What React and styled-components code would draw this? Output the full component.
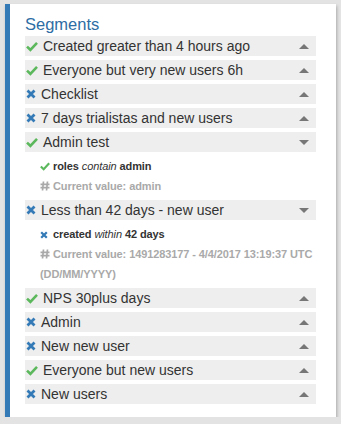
import React from "react";
import styled, { createGlobalStyle } from "styled-components";

const Global = createGlobalStyle`
  html, body { margin: 0; padding: 0; background: #e3e3e3; }
  body { font-family: "Liberation Sans", Arial, sans-serif; }
`;

const Card = styled.div`
  margin: 4px 5px 0 5px;
  width: 331px;
  box-sizing: border-box;
  background: #fff;
  border-left: 5px solid #337ab7;
  box-shadow: 1px 2px 3px rgba(0,0,0,0.25);
  padding: 9px 20px 13px 15px;
`;

const Title = styled.h3`
  margin: 0;
  font-size: 16.5px;
  font-weight: normal;
  line-height: 23px;
  color: #2e6da4;
`;

const Row = styled.div`
  display: flex;
  align-items: center;
  height: 20px;
  margin-bottom: 4px;
  background: #eeeeee;
  &:last-child { margin-bottom: 0; }
`;

const IconBox = styled.span`
  display: inline-flex;
  align-items: center;
  justify-content: center;
  width: ${p => p.$w}px;
  margin-left: 1px;
  margin-right: ${p => p.$gap}px;
`;

const Name = styled.span`
  flex: 1;
  font-size: 14px;
  color: #333;
  white-space: nowrap;
  line-height: 20px;
`;

const Caret = styled.span`
  width: 0;
  height: 0;
  margin-right: 7px;
  border-left: 5px solid transparent;
  border-right: 5px solid transparent;
  ${p => p.$down
    ? "border-top: 5px solid #777;"
    : "border-bottom: 5px solid #777;"}
`;

const Details = styled.div`
  padding: 0 0 4px 15px;
  font-size: 11px;
  letter-spacing: -0.1px;
  font-weight: bold;
  line-height: 20px;
  color: #333;
`;

const Line = styled.div`
  color: ${p => (p.$muted ? "#a9a9a9" : "#333")};
`;

const SubIcon = styled.span`
  display: inline-block;
  width: 13px;
  vertical-align: -1px;
  svg { display: block; }
`;

const Op = styled.em`
  font-weight: normal;
`;

const Check = ({ size = 12 }) => (
  <svg width={size} height={size} viewBox="0 0 12 12">
    <path d="M1 6.6 L4.4 9.8 L11 2.8" fill="none" stroke="#5cb85c" strokeWidth="2.6" strokeLinejoin="miter" />
  </svg>
);

const Cross = ({ size = 10 }) => (
  <svg width={size} height={size} viewBox="0 0 10 10">
    <path d="M1.5 1.5 L8.5 8.5 M8.5 1.5 L1.5 8.5" stroke="#337ab7" strokeWidth="2.8" strokeLinecap="butt" />
  </svg>
);

const Hash = () => (
  <svg width="10" height="10" viewBox="0 0 10 10">
    <path d="M3.5 0.5 L2.5 9.5 M7.5 0.5 L6.5 9.5 M0.5 3.3 H9.5 M0.5 6.7 H9.5" stroke="#a9a9a9" strokeWidth="1.7" />
  </svg>
);

const segments = [
  { ok: true, name: "Created greater than 4 hours ago" },
  { ok: true, name: "Everyone but very new users 6h" },
  { ok: false, name: "Checklist" },
  { ok: false, name: "7 days trialistas and new users" },
  {
    ok: true, name: "Admin test", open: true,
    rule: { ok: true, field: "roles", op: "contain", value: "admin" },
    current: "admin",
  },
  {
    ok: false, name: "Less than 42 days - new user", open: true,
    rule: { ok: false, field: "created", op: "within", value: "42 days" },
    current: "1491283177 - 4/4/2017 13:19:37 UTC (DD/MM/YYYY)",
  },
  { ok: true, name: "NPS 30plus days" },
  { ok: false, name: "Admin" },
  { ok: false, name: "New new user" },
  { ok: true, name: "Everyone but new users" },
  { ok: false, name: "New users" },
];

export default function App() {
  return (
    <>
      <Global />
      <Card>
        <Title>Segments</Title>
        {segments.map((s, i) => (
          <React.Fragment key={i}>
            <Row>
              {s.ok ? (
                <IconBox $w={12} $gap={5}><Check /></IconBox>
              ) : (
                <IconBox $w={10} $gap={5}><Cross /></IconBox>
              )}
              <Name>{s.name}</Name>
              <Caret $down={s.open} />
            </Row>
            {s.open && (
              <Details>
                <Line>
                  <SubIcon>{s.rule.ok ? <Check size={10} /> : <Cross size={8} />}</SubIcon>
                  {s.rule.field} <Op>{s.rule.op}</Op> {s.rule.value}
                </Line>
                <Line $muted>
                  <SubIcon><Hash /></SubIcon>
                  Current value: {s.current}
                </Line>
              </Details>
            )}
          </React.Fragment>
        ))}
      </Card>
    </>
  );
}
